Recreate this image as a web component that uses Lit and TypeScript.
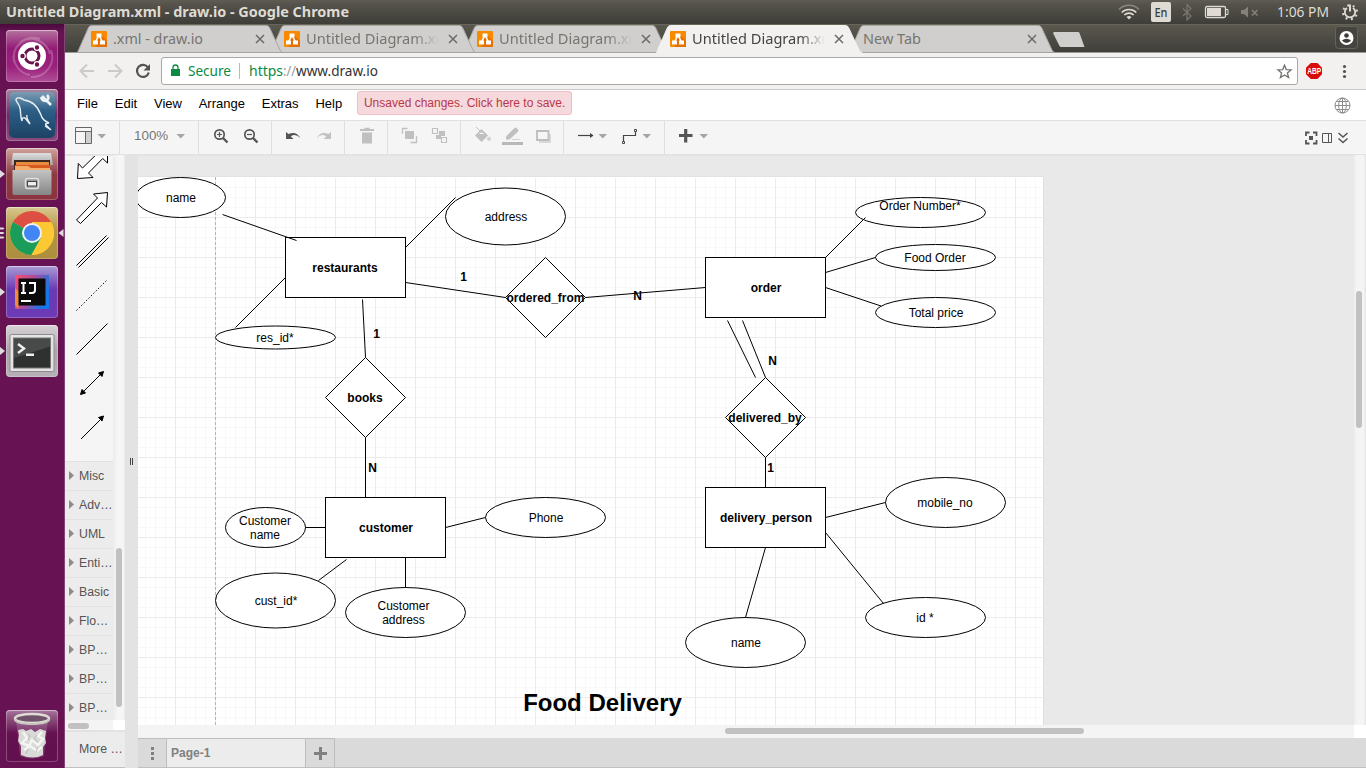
import { LitElement, html, svg, css } from "lit";
import { customElement, property } from "lit/decorators.js";

const UI = `"Noto Sans", "Open Sans", sans-serif`;

/** Text set to an exact advance width. */
const fit = (t: string, w: number, size: number, fill: string, weight = 400, h = 20, base = 14) => html`<svg
  width=${w} height=${h} style="overflow:visible;display:block;flex:none"><text x="0" y=${base} font-family=${UI}
  font-size=${size} font-weight=${weight} fill=${fill} textLength=${w} lengthAdjust="spacingAndGlyphs">${t}</text></svg>`;

const TABS = [
  { title: ".xml - draw.io", w: 90, icon: true, active: false },
  { title: "Untitled Diagram.xml", w: 147, icon: true, active: false },
  { title: "Untitled Diagram.xml", w: 147, icon: true, active: false },
  { title: "Untitled Diagram.xml", w: 147, icon: true, active: true },
  { title: "New Tab", w: 58, icon: false, active: false },
];

@customElement("system-bar")
class SystemBar extends LitElement {
  static styles = css`
    :host { display: flex; height: 24px; box-sizing: border-box; align-items: center; padding: 0 0 0 6px; justify-content: space-between;
      background: linear-gradient(#5e5c53, #54524a 20%, #3e3d38); }
  `;
  render() {
    return html`${fit("Untitled Diagram.xml - draw.io - Google Chrome", 343, 14.5, "#dfdbd2", 700, 20, 15)}
      <svg width="256" height="24" viewBox="1110 0 256 24">
        <g fill="none" stroke="#dfdbd2" stroke-width="1.6">
          <path d="M1119 9.500a14 14 0 0 1 20 0" stroke="#8a877f" />
          <path d="M1121.700 12.500a10.500 10.500 0 0 1 14.600 0" />
          <path d="M1124.300 15a6.800 6.800 0 0 1 9.400 0" />
        </g>
        <path d="M1126.500 17a4 4 0 0 1 5 0l-2.500 2.500z" fill="#dfdbd2" />
        <rect x="1151" y="2" width="20" height="20" rx="2" fill="#dfdbd2" />
        <text x="1154.500" y="17" font-family=${UI} font-size="12.500" font-weight="500" textLength="13" lengthAdjust="spacingAndGlyphs" fill="#3c3b37">En</text>
        <path d="M1183 8.500l8 7.500-4 4V4.500l4 4-8 7.500" fill="none" stroke="#7b7870" stroke-width="1.200" />
        <rect x="1205.500" y="6.500" width="20" height="11" rx="1.500" fill="none" stroke="#dfdbd2" stroke-width="1.300" />
        <rect x="1207" y="8" width="14" height="8" fill="#dfdbd2" />
        <path d="M1226 9.500h2v5h-2" fill="none" stroke="#dfdbd2" />
        <path d="M1241 10h3l4-3.500v11l-4-3.500h-3z" fill="#85827a" />
        <path d="M1252 10l5.500 5.500m0-5.500l-5.500 5.500" stroke="#85827a" stroke-width="1.500" />
        <text x="1277" y="17" font-family=${UI} font-size="14" textLength="52" lengthAdjust="spacingAndGlyphs" fill="#dfdbd2">1:06 PM</text>
        <g fill="none" stroke="#dfdbd2">
          <path d="M1347 8a5.200 5.200 0 1 0 6 0" stroke-width="1.800" />
          <path d="M1350 4.500v7" stroke-width="2" />
          <circle cx="1350" cy="12.300" r="7" stroke-width="2" stroke-dasharray="2 3.500" stroke-dashoffset="3" />
        </g>
      </svg>`;
  }
}

const ubuntu = svg`
  <path d="M8 32a20 20 0 0 1 26-23M45 20a20 20 0 0 1-20 27M14 12a20 20 0 0 1 30 12M8 24a19 19 0 0 0 16 21" fill="none" stroke="#ffffff" stroke-opacity=".22" stroke-width="2"/>
  <circle cx="26" cy="26" r="14" fill="#fff"/>
  <circle cx="26" cy="26" r="7" fill="none" stroke="#6a1150" stroke-width="3"/>
  <g stroke="#fff" stroke-width="1.200" fill="#6a1150"><circle cx="16.500" cy="26" r="2.800"/><circle cx="31" cy="17.500" r="2.800"/><circle cx="31" cy="34.500" r="2.800"/></g>`;
const mysql = svg`
  <rect x="3" y="3" width="46" height="46" rx="5" fill="url(#sea)"/>
  <path d="M10 10c2-2 6-1 8 1 9 1 14 7 17 15 1 4 3 6 8 8-3 0-4 1-3 2l5 5-6-4M10 10c-1 2 3 4 4 9 1 4 0 8 2 13 0-3 1-4 3-3 2 2 3 4 5 6-2-4-4-6-3-9" fill="none" stroke="#e8f0f5" stroke-width="1.400"/>
  <path d="M36 7l4 4M41 6c2 2 2 4-1 6-2 0-4-1-5-4M40 11l5 5" fill="none" stroke="#eef3f6" stroke-width="2.600"/>`;
const files = svg`
  <path d="M7 5h38l2 12H5z" fill="url(#steel)"/>
  <rect x="8" y="12" width="36" height="13" fill="#3c2a20"/>
  <path d="M10 14h33v3H10z" fill="#e98a3f"/><path d="M9 17h35v5H9z" fill="#d8591e"/><path d="M9 18h13l3 2h19v4H9z" fill="#f5ad6c"/>
  <path d="M6.500 22h39v24a2 2 0 0 1-2 1H8.500a2 2 0 0 1-2-1z" fill="url(#steel2)"/>
  <rect x="19.500" y="30.500" width="13" height="10" rx="2" fill="#9b9b9b" stroke="#e0e0e0" stroke-width="1.500"/><rect x="21.500" y="33.500" width="9" height="4.500" fill="#eee" stroke="#444"/>`;
const chrome = svg`
  <circle cx="26" cy="26" r="22" fill="#fcc934"/>
  <path d="M26 26L7 15A22 22 0 0 1 45 15H26z" fill="#dd4f43"/><path d="M7 15A22 22 0 0 0 25.500 48L35 31 26 26z" fill="#1a9c5a"/>
  <path d="M35 31L25.500 48A22 22 0 0 0 45 15H26z" fill="#fcc934"/>
  <circle cx="26" cy="26" r="10" fill="#f1f1f1"/><circle cx="26" cy="26" r="8" fill="#4285f4"/>`;
const idea = svg`
  <path d="M9 9h34v34H9z" fill="url(#idea)"/><path d="M9 22l6 6-3 15-3-4z" fill="#f08a3c"/>
  <rect x="12.500" y="12.500" width="27" height="27" fill="#0b0b0b"/>
  <path d="M15 17h5M17.500 17v10M15 27h5M23 17h6v7q0 3-3 3h-3" fill="none" stroke="#fff" stroke-width="2"/><path d="M15 35h10" stroke="#fff" stroke-width="2"/>`;
const terminal = svg`
  <rect x="4" y="9.500" width="44" height="37" rx="1.500" fill="#e4e4e4" stroke="#8f8c8d"/>
  <rect x="7.500" y="13" width="37" height="30" fill="#2f3030" stroke="#777"/><path d="M8 13.500h36v8L8 33z" fill="#fff" opacity=".12"/>
  <path d="M12 19l6 4.500-6 4.500M20 29.700h8" fill="none" stroke="#eee" stroke-width="2.400"/>`;
const trash = svg`
  <path d="M10 10l4 36q12 5 24 0l4-36z" fill="#fff" fill-opacity=".16"/>
  <path d="M12 20l5-1 3 2 5-2 4 3 5-3 6 2-1 7 1 5-3 4 0 8q-10 5-22 0l0-9-3-5 1-6z" fill="#d9dad7"/>
  <path d="M17 22l4 6-5 5 7 3 3-6 6 5 5-6-5-3 4-4M18 40l6-4 7 5 5-4" fill="none" stroke="#f4f4f2" stroke-width="2.500"/>
  <path d="M22 24l2 2-2 4M31 25l-3 4 4 3M22 39l-2 5M32 37l-2 5" fill="none" stroke="#b9bbb6"/>
  <ellipse cx="26" cy="8.500" rx="17" ry="4.500" fill="#70536a" stroke="#dddcd5" stroke-width="2.500"/>
  <path d="M8.500 9q1 5 17.500 5t17.500-5" fill="none" stroke="#c6c4be" stroke-width="1.800"/>`;

const APPS = [
  { c: "pink", art: ubuntu }, { c: "plum", art: mysql }, { c: "red", art: files, mark: 1 },
  { c: "gold", art: chrome, mark: 3 }, { c: "violet", art: idea, mark: 1 }, { c: "grey", art: terminal, mark: 1 },
];

@customElement("app-launcher")
class AppLauncher extends LitElement {
  static styles = css`
    :host { display: flex; flex-direction: column; gap: 7px; width: 65px; box-sizing: border-box; padding: 6px 0 6px; flex: none;
      background: linear-gradient(#4a0a3c, #671253 8px, #671253); border-right: 1px solid #844475; }
    .row { display: grid; grid-template-columns: 6px 52px 6px; height: 52px; }
    .tile { border-radius: 4px; box-shadow: inset 0 0 0 1px #ffffff38, inset 0 1px 1px #ffffff60; height: 52px; }
    .tile svg { display: block; }
    .pink { background: linear-gradient(#b4739f, #941c76 35%, #9a207b 70%, #b04f98); }
    .plum { background: linear-gradient(#a884a0, #6e2b62 50%, #8b4a80); }
    .red { background: linear-gradient(#cfa29c, #8f3b42 50%, #8b333f); }
    .gold { background: linear-gradient(#d8c890, #b39544 45%, #ac8e3e); }
    .violet { background: linear-gradient(#a99ad4, #6a3ab2 45%, #6d3bb5); }
    .grey { background: linear-gradient(#d8d3d7, #aca4ab 50%, #b8b1b7); }
    .bin { background: linear-gradient(#a5749a, #641150 45%, #63104f); }
    .last { margin-top: auto; }
    .edge { overflow: visible; }
  `;
  render() {
    const marks = (n = 0) => n === 1 ? svg`<path d="M0 22l5 4-5 4z" fill="#ddd"/>`
      : n === 3 ? svg`<path d="M0 20.500h3l1.500 1-1.500 1H0zM0 25h3l1.500 1-1.500 1H0zM0 29.500h3l1.500 1-1.500 1H0z" fill="#ddd"/>` : "";
    return html`
      ${APPS.map((a) => html`<div class="row">
        <svg class="edge" width="6" height="52">${marks(a.mark)}</svg>
        <div class="tile ${a.c}"><svg width="52" height="52">
          <defs>
            <linearGradient id="sea" x2="0" y2="1"><stop stop-color="#7d9cb5" /><stop offset=".4" stop-color="#2c5f87" /><stop offset="1" stop-color="#1d4264" /></linearGradient>
            <linearGradient id="steel" x2="0" y2="1"><stop stop-color="#dedede" /><stop offset="1" stop-color="#a5a5a5" /></linearGradient>
            <linearGradient id="steel2" x2="0" y2="1"><stop stop-color="#c4c4c4" /><stop offset="1" stop-color="#858585" /></linearGradient>
            <linearGradient id="idea" x2="1" y2=".4"><stop stop-color="#fb4f72" /><stop offset=".5" stop-color="#b24a96" /><stop offset="1" stop-color="#1478e8" /></linearGradient>
          </defs>${a.art}</svg></div>
        <svg class="edge" width="6" height="52">${a.mark === 3 ? svg`<path d="M5.500 22l-5 4 5 4z" fill="#ddd"/>` : ""}</svg>
      </div>`)}
      <div class="row last"><span></span><div class="tile bin"><svg width="52" height="52">${trash}</svg></div></div>`;
  }
}

@customElement("browser-frame")
class BrowserFrame extends LitElement {
  static styles = css`
    :host { display: block; flex: none; }
    .strip { display: flex; height: 29px; padding: 0 0 0 13px; background: linear-gradient(#5b594f, #3f3e39); box-shadow: inset 0 1px #68665a, inset 0 -1px #9a9994; }
    .tab { position: relative; width: 193px; flex: none; display: flex; box-sizing: border-box; padding: 6px 0 0 13px; height: 29px; }
    .shape { position: absolute; left: 0; top: 0; z-index: 0; overflow: visible; }
    .fav { flex: none; margin: 1px 6px 0 0; z-index: 1; }
    .name { flex: 1; min-width: 0; height: 22px; z-index: 1; }
    .faded .name { -webkit-mask-image: linear-gradient(90deg, #000 108px, transparent 133px); mask-image: linear-gradient(90deg, #000 108px, transparent 133px); }
    .x { flex: none; width: 10px; margin: 4px 6px 0 7px; height: 10px; z-index: 1; }
    .plus { margin: 7px 0 0 9px; }
    .spacer { flex: 1; }
    .user { margin: 2px 7px 0 0; }
    .nav { display: flex; height: 37px; box-sizing: border-box; background: #f2f1f0; border-bottom: 1px solid #cbcac8; padding-top: 4px; }
    .omni { width: 1137px; height: 28px; box-sizing: border-box; border: 1px solid #a9a8a7; border-radius: 3px; background: #fff; display: flex; padding: 4px 0 0 9px; }
    .divider { width: 1px; height: 16px; background: #bbb; margin: 1px 9px 0 8px; }
    .star { margin-left: auto; margin-right: 4px; }
    .lock { margin: 2px 8px 0 0; }
  `;
  render() {
    return html`
      <div class="strip">
        ${TABS.map((t, i) => html`<div class="tab ${t.icon && i ? "faded" : ""}" style="z-index:${t.active ? 9 : 6 - i}">
          <svg class="shape" width="207" height="29">
            <path d="M-.5 28.500L10.500 3.500Q11.500 1.500 13.500 1.500H188.500Q190.500 1.500 191.500 3.500L202 26q1 2.500 3 2.500${t.active ? "V29H0z" : ""}"
              fill=${t.active ? "#f2f1f0" : "#d0cfcd"} stroke=${t.active ? "#f2f1f0" : "#a8a7a3"} stroke-width="1" />
            ${t.active ? "" : svg`<path d="M0 28.500h205" stroke="#a5a4a1"/>`}
          </svg>
          ${t.icon ? html`<svg class="fav" width="16" height="16"><rect width="16" height="16" rx="1" fill="#f98a00" /><path d="M10 4l6 6v6H6l-3-3z" fill="#e57000" />
            <path d="M7.500 5L4.500 11M8.500 5L11.500 11" stroke="#fff" stroke-width="1.600" /><path d="M5.500 2.500h5v4h-5zM2 9.500h5v4H2zM9 9.500h5v4H9z" fill="#fff" /></svg>` : ""}
          <div class="name">${fit(t.title, t.w, 14.5, t.active ? "#45443f" : "#77756f", 400, 22, 14)}</div>
          <svg class="x" width="10" height="10"><path d="M1 1l8 8M9 1L1 9" stroke="#6b6a65" stroke-width="1.500" /></svg>
        </div>`)}
        <svg class="plus" width="33" height="17"><path d="M2 1h24q1 0 1.500 1l5 14H9Q8 16 7.500 15L1 2z" fill="#d0cfcd" /></svg>
        <span class="spacer"></span>
        <svg class="user" width="24" height="24"><rect x=".5" y=".5" width="22" height="22" rx="3" fill="#45443f" stroke="#65635a" />
          <circle cx="11.500" cy="12" r="7" fill="#fff" /><circle cx="11.500" cy="9.500" r="2.300" fill="#3d3c38" /><path d="M7 14.200q4.500-3 9 0-1.500 2.800-4.500 2.800T7 14.200z" fill="#3d3c38" /></svg>
      </div>
      <div class="nav">
        <svg width="96" height="28" viewBox="65 57 96 28" fill="none" stroke="#cbcac8" stroke-width="2">
          <path d="M94 71H81M87 64.500L80.500 71l6.500 6.500M108 71h13M115 64.500l6.500 6.500-6.500 6.500" />
          <path d="M148 67.500a6 6 0 1 0 .8 5" stroke="#55534f" stroke-width="2.200" /><path d="M150 64v6.500h-6.500z" fill="#55534f" stroke="none" />
        </svg>
        <div class="omni">
          <svg class="lock" width="9" height="13"><path d="M0 5h9v7H0z" fill="#0b8a43" /><path d="M2 5.500V3.500a2.500 2.500 0 0 1 5 0v2" fill="none" stroke="#0b8a43" stroke-width="1.300" /></svg>
          ${fit("Secure", 43, 14, "#0b8a43")}
          <span class="divider"></span>
          ${fit("https", 34, 14, "#0b8a43")}${fit("://", 13, 14, "#999")}${fit("www.draw.io", 82, 14, "#333")}
          <svg class="star" width="17" height="19"><path d="M8.500 3.200l1.800 4.400 4.800.3-3.700 3 1.200 4.700-4.100-2.600-4.100 2.600 1.200-4.700-3.700-3 4.800-.3z" fill="none" stroke="#73716d" stroke-width="1.300" /></svg>
        </div>
        <svg width="68" height="28" viewBox="1298 57 68 28">
          <path d="M1310.800 63h6.600l4.600 4.700v6.600l-4.600 4.700h-6.600l-4.800-4.700v-6.600z" fill="#d90b0b" />
          <text x="1307.300" y="74" font-family="Liberation Sans, sans-serif" font-size="8.500" font-weight="700" textLength="14" lengthAdjust="spacingAndGlyphs" fill="#fff">ABP</text>
          <g fill="#55534f"><circle cx="1344.500" cy="66.500" r="1.600" /><circle cx="1344.500" cy="71.500" r="1.600" /><circle cx="1344.500" cy="76.500" r="1.600" /></g>
        </svg>
      </div>`;
  }
}

const caret = (x: number, y = 136) => svg`<path d="M${x - 4.5} ${y - 2}h8.500l-4.200 4.500z" fill="#a5a5a5"/>`;
const GROUPS: { x: number; end: number; art: unknown }[] = [
  { x: 65, end: 120, art: svg`<path d="M75.500 127.500h16v16h-16zM75.500 131.500h16M85.500 131.500v12" fill="none" stroke="#666"/><path d="M86 132h5v11h-5z" fill="#d0d0d0"/>${caret(102)}` },
  { x: 120, end: 199, art: svg`<text x="134" y="140" font-size="13.400" fill="#757575">100%</text>${caret(181)}` },
  { x: 199, end: 272, art: svg`<g fill="none" stroke="#555" stroke-width="1.700"><circle cx="219.500" cy="134.500" r="4.700"/><path d="M223 138l4.500 4.500" stroke-width="2.400"/><path d="M217 134.500h5M219.500 132v5" stroke-width="1.200"/>
      <circle cx="249.500" cy="134.500" r="4.700"/><path d="M253 138l4.500 4.500" stroke-width="2.400"/><path d="M247 134.500h5" stroke-width="1.200"/></g>` },
  { x: 272, end: 345, art: svg`<path d="M286 132v7h7.500l-2.700-2.500q4-3.500 9.700 1.500-4.500-7.500-12-4z" fill="#555"/><path d="M331 132v7h-7.500l2.700-2.500q-4-3.500-9.700 1.500 4.500-7.500 12-4z" fill="#c2c2c2"/>` },
  { x: 345, end: 388, art: svg`<path d="M360 129h4.500v-1.200h5V129h4.500v2h-14zM362 132.500h10v11h-10z" fill="#c0c0c0"/>` },
  { x: 388, end: 461, art: svg`<path d="M405 131h9v8h-9z" fill="#c0c0c0"/><path d="M402.500 134v-5.500h5M416.500 136v6.500h-6" fill="none" stroke="#c0c0c0" stroke-width="1.300"/>
      <path d="M432.500 128.500h5v5h-5zM441.500 137.500h5v5h-5z" fill="none" stroke="#c0c0c0" stroke-width="1.200"/><path d="M436 135v4h5v-3h4v-5h-6v4z" fill="#c0c0c0"/>` },
  { x: 461, end: 564, art: svg`<path d="M475 135.500l6.500-6.500 6.500 6.500-6.500 6.500z" fill="#c0c0c0"/><path d="M476 127l6 6M478 134.500l3.500-3.500 3.500 3.500z" stroke="#c0c0c0" fill="#f5f5f5"/><circle cx="489" cy="138.800" r="2.100" fill="#d2d2d2"/>
      <path d="M506 139.500v-3l8.500-8.500q1-1 2 0l1.500 1.500q1 1 0 2l-8.500 8z" fill="#c0c0c0"/><path d="M512 139.500h8" stroke="#d4d4d4"/><path d="M502 142h21v3h-21z" fill="#b8b8b8"/>
      <path d="M540 134h11v9h-12v-2z" fill="#d8d8d8"/><path d="M537 131h11.500v9H537z" fill="#f5f5f5" stroke="#bdbdbd" stroke-width="1.800"/>` },
  { x: 564, end: 665, art: svg`<path d="M578 135.500h15" stroke="#444" stroke-width="1.200"/><path d="M590 133l3.500 2.500-3.500 2.500z" fill="#444"/>${caret(603)}
      <path d="M623.500 141v-5.500h12v-4" fill="none" stroke="#444" stroke-width="1.200"/><path d="M622.500 141.500h2v2h-2zM634.500 129.500h2v2h-2z" fill="#fff" stroke="#444"/>${caret(647)}` },
  { x: 665, end: 720, art: svg`<path d="M679 135.500h13.500M685.700 129v13.500" stroke="#555" stroke-width="3.200"/>${caret(704)}` },
];

@customElement("editor-chrome")
class EditorChrome extends LitElement {
  static styles = css`
    :host { display: block; flex: none; font: 13px "Liberation Sans", Arial, sans-serif; }
    .menu { display: flex; height: 31px; box-sizing: border-box; background: #fff; border-bottom: 1px solid #e0e0e0; padding: 1px 15px 0 12px; align-items: flex-start; }
    .menu span { line-height: 25px; margin-right: 16.8px; color: #000; }
    .menu .notice { box-sizing: border-box; width: 215px; height: 24px; line-height: 22px; font-size: 12px; color: #b8384a; background: #f6d9dc; border: 1px solid #efbfc5; border-radius: 3px; padding-left: 6px; margin: 0 0 0 -2px; white-space: nowrap; }
    .globe { margin: 6px 0 0 auto; }
    .tools { display: flex; height: 34px; box-sizing: border-box; background: #f5f5f5; border-bottom: 1px solid #e2e2e2; }
    .group { display: block; box-sizing: border-box; border-right: 1px solid #dfdfdf; flex: none; }
    .group:nth-of-type(9), .right { border: 0; }
    .right { margin-left: auto; }
  `;
  render() {
    return html`
      <div class="menu">
        ${["File", "Edit", "View", "Arrange", "Extras", "Help"].map((m) => html`<span>${m}</span>`)}
        <span class="notice">Unsaved changes. Click here to save.</span>
        <svg class="globe" width="17" height="17" fill="none" stroke="#8c8c8c"><circle cx="8.500" cy="8.500" r="7.500" /><ellipse cx="8.500" cy="8.500" rx="3.800" ry="7.500" /><path d="M8.500 1v15M1 8.500h15M2.300 4.500h12.400M2.300 12.500h12.400" /></svg>
      </div>
      <div class="tools">
        ${GROUPS.map((g) => html`<svg class="group" width=${g.end - g.x} height="33" viewBox="${g.x} 121 ${g.end - g.x} 33" preserveAspectRatio="xMinYMin slice">${g.art}</svg>`)}
        <svg class="right" width="66" height="33" viewBox="1300 121 66 33" fill="none" stroke="#555">
          <path d="M1306 136v-3.500h3.500M1313 132.500h3.500v3.500M1306 140v3.500h3.500M1316.500 140v3.500h-3.500" stroke-width="1.800" /><path d="M1309 136h4v4h-4z" fill="#555" stroke="none" />
          <path d="M1322.500 133.500h9v9h-9zM1328.500 133.500v9" /><path d="M1338.500 133l4.500 4 4.500-4M1338.500 138.500l4.500 4 4.500-4" stroke-width="1.500" />
        </svg>
      </div>`;
  }
}

@customElement("shape-sidebar")
class ShapeSidebar extends LitElement {
  static styles = css`
    :host { display: grid; grid-template: 565px 10px 1fr / 48px 12px; width: 60px; flex: none; background: #f5f5f5; font: 12.3px "Liberation Sans", Arial, sans-serif; color: #555; }
    .list { overflow: hidden; }
    .palette { display: block; }
    .section { height: 29px; box-sizing: border-box; border-top: 1px solid #e2e2e2; background: #ececec; display: flex; align-items: center; gap: 5px; padding: 0 0 1px 4px; white-space: nowrap; }
    .section svg { flex: none; }
    .track { background: linear-gradient(90deg, #ececec, #f6f6f6 40%, #f6f6f6 80%, #ececec); padding: 393px 3px 0; }
    .thumb { display: block; height: 159px; border-radius: 3px; background: #c1c1c1; }
    .htrack { background: #f4f4f4; padding: 3px 0 0 3px; }
    .hthumb { display: block; width: 21px; height: 6px; border-radius: 3px; background: #c1c1c1; }
    .corner { background: #fff; }
    .more { grid-column: 1 / 3; background: #ececec; border-top: 2px solid #e2e2e2; padding-left: 14px; line-height: 34px; border-bottom: 1px solid #c0c0c0; white-space: nowrap; }
  `;
  render() {
    return html`
      <div class="list">
        <svg class="palette" width="48" height="306" viewBox="65 155 48 306" fill="none" stroke="#000" stroke-width="1">
          <path d="M77.500 178.500l.8-15 4.200 4.500L103 148l4.500 2v13l-4.800-4.500L88.500 173l4.500 4.500z" fill="#fff" />
          <path d="M76.500 220l4 3.500 21-21 5 4.500 1-14.500-14 1.500 4 4z" fill="#fff" />
          <path d="M76.500 265.500l30-30M78.500 267.500l30-30M76.500 354.500l31-31M81 394l22-22M81 439l22-22" />
          <path d="M76.500 310.500l30-30" stroke-dasharray="1.400 2" />
          <path d="M80.500 394.500l1.500-5 3.500 3.500zM103.500 371.500l-5 1.500 3.500 3.500zM103.500 416l-5 1.500 3.500 3.500z" fill="#000" />
          <path d="M65 155.500h48" stroke="#e6e6e6" />
        </svg>
        ${["Misc", "Adv…", "UML", "Enti…", "Basic", "Flo…", "BP…", "BP…", "BP…"].map((s) => html`<div class="section"><svg width="5" height="9"><path d="M0 0l5 4.500L0 9z" fill="#8c8c8c" /></svg>${s}</div>`)}
      </div>
      <div class="track"><span class="thumb"></span></div>
      <div class="htrack"><span class="hthumb"></span></div><div class="corner"></div>
      <div class="more">More …</div>`;
  }
}

type Node = [kind: "box" | "oval" | "rhomb", cx: number, cy: number, rx: number, ry: number, label: string[], dx?: number, dy?: number];
const NODES: Node[] = [
  ["box", 345.5, 267.5, 60, 30, ["restaurants"], -0.5], ["box", 765.5, 287.5, 60, 30, ["order"], 0.5],
  ["box", 385.5, 527.5, 60, 30, ["customer"], 0.5], ["box", 765.5, 517.5, 60, 30, ["delivery_person"], 0.5],
  ["rhomb", 545.5, 297.5, 40, 40, ["ordered_from"]], ["rhomb", 365.5, 397.5, 40, 40, ["books"], -0.5], ["rhomb", 765.5, 417.5, 40, 40, ["delivered_by"], -0.5],
  ["oval", 180.5, 197.5, 45, 20, ["name"], 0.5], ["oval", 505.5, 216.5, 60, 28.5, ["address"], 0.5], ["oval", 275.5, 337.5, 60, 11.5, ["res_id*"], -0.5],
  ["oval", 265.5, 527.5, 40, 20, ["Customer", "name"], -0.5], ["oval", 275.5, 600.5, 60, 27.5, ["cust_id*"], 0.5],
  ["oval", 405.5, 612.5, 60, 25, ["Customer", "address"], -2], ["oval", 545.5, 517.5, 60, 20, ["Phone"], 0.5],
  ["oval", 920.5, 212.5, 65, 15, ["Order Number*"], -0.5, -6.5], ["oval", 935.5, 257.5, 60, 13, ["Food Order"], -0.5], ["oval", 935.5, 312.5, 60, 15, ["Total price"], 0.5],
  ["oval", 945.5, 502.5, 60, 25, ["mobile_no"], -0.5], ["oval", 925.5, 617.5, 60, 20, ["id *"], -0.5], ["oval", 745.5, 642.5, 60, 25, ["name"], 0.5],
];
const EDGES = [
  [222.5, 214.5, 296.5, 240.5], [285.5, 277.5, 235.5, 327.5], [405.5, 247.5, 455.5, 197.5], [405.5, 282.5, 505.5, 297.5],
  [585.5, 297.5, 705.5, 287.5], [362.5, 299.5, 365.5, 357.5], [365.5, 437.5, 365.5, 497.5], [825.5, 257.5, 865.5, 217.5],
  [825.5, 272.5, 875.5, 257.5], [825.5, 287.5, 881, 306], [727.5, 320.5, 755.5, 377.5], [742.5, 320.5, 765.5, 377.5],
  [765.5, 457.5, 765.5, 487.5], [305.5, 527.5, 325.5, 527.5], [445.5, 527.5, 485.5, 517.5], [346.5, 559.5, 318.5, 580.5],
  [405.5, 557.5, 405.5, 587.5], [825.5, 517.5, 885.5, 502.5], [825.5, 532.5, 883.5, 603.5], [765.5, 547.5, 745.5, 617.5],
];
const MARKS: [string, number, number][] = [["1", 463.5, 281], ["N", 637.5, 300], ["1", 376.5, 338], ["N", 372.5, 472], ["N", 772.5, 365], ["1", 770.5, 472]];

@customElement("er-canvas")
class ErCanvas extends LitElement {
  static styles = css`
    :host { display: block; }
    .sheet { display: block; background: #e9e9e9; font-family: "Liberation Sans", Arial, sans-serif; font-size: 12px; }
    .strong { font-weight: 700; }
    .heading { font-weight: 700; font-size: 24px; }
  `;
  render() {
    return html`<svg class="sheet" width="1216" height="570" viewBox="138 155 1216 570">
      <defs>
        <pattern id="grid" x="135" y="177" width="40" height="40" patternUnits="userSpaceOnUse">
          <path d="M10.500 0v40M20.500 0v40M30.500 0v40M0 10.500h40M0 20.500h40M0 30.500h40" stroke="#f8f8f8" /><path d="M.5 0v40M0 .5h40" stroke="#ebebeb" />
        </pattern>
      </defs>
      <path d="M138 155.500h1216" stroke="#e3e3e3" />
      <rect x="135" y="177" width="908" height="560" fill="#fff" /><rect x="135" y="178" width="907" height="560" fill="url(#grid)" />
      <path d="M138 176.500h905" stroke="#e2e2e2" /><path d="M1043.500 177v550" stroke="#dedede" />
      <path d="M215.500 177v548" stroke="#b4b4b4" stroke-dasharray="3 2" />
      <g fill="#fff" stroke="#000">${NODES.map(([k, x, y, rx, ry]) =>
        k === "box" ? svg`<rect x=${x - rx} y=${y - ry} width=${rx * 2} height=${ry * 2}/>`
        : k === "oval" ? svg`<ellipse cx=${x} cy=${y} rx=${rx} ry=${ry}/>`
        : svg`<path d="M${x} ${y - ry}L${x + rx} ${y} ${x} ${y + ry} ${x - rx} ${y}z"/>`)}</g>
      <g stroke="#000">${EDGES.map(([a, b, c, d]) => svg`<path d="M${a} ${b}L${c} ${d}"/>`)}</g>
      <g text-anchor="middle">
        ${NODES.map(([k, x, y, , , label, dx = 0, dy = 0]) => label.map((t, i) => svg`<text class=${k === "oval" ? "" : "strong"} x=${x + dx} y=${Math.round(y + dy + 4 - (label.length - 1) * 7 + i * 14)}>${t}</text>`))}
        ${MARKS.map(([t, x, y]) => svg`<text class="strong" x=${x} y=${y}>${t}</text>`)}
        <text class="heading" x="602.500" y="711">Food Delivery</text>
      </g>
    </svg>`;
  }
}

@customElement("app-root")
class AppRoot extends LitElement {
  @property() page = "Page-1";
  static styles = css`
    :host { display: flex; flex-direction: column; width: 1366px; height: 768px; overflow: hidden; background: #fff; font: 12px "Liberation Sans", Arial, sans-serif; }
    .desk { display: flex; flex: 1; min-height: 0; }
    .window { display: flex; flex-direction: column; width: 1301px; }
    .work { display: flex; flex: 1; min-height: 0; }
    .split { width: 13px; background: #e3e3e3; display: flex; align-items: center; justify-content: center; flex: none; }
    .stage { display: grid; grid-template: 570px 13px 30px / 1216px 12px; }
    .vtrack { background: linear-gradient(90deg, #eee, #f5f5f5 30%, #f5f5f5 80%, #e4e4e4); padding: 136px 4px 0 2px; }
    .vthumb { display: block; height: 137px; border-radius: 3px; background: #c1c1c1; }
    .htrack { background: #f4f4f4; padding: 3px 0 0 587px; }
    .hthumb { display: block; height: 6px; width: 359px; border-radius: 3px; background: #c1c1c1; }
    .corner { background: #fff; }
    .pages { grid-column: 1 / 3; display: flex; background: #dadada; border-bottom: 1px solid #c0c0c0; box-sizing: border-box; }
    .cell { box-sizing: border-box; width: 29px; border: 1px solid #bdbdbd; border-bottom: 0; border-left: 0; }
    .current { box-sizing: border-box; width: 139px; background: #ececec; border-top: 1px solid #bdbdbd; border-right: 1px solid #bdbdbd; color: #808080; font-weight: 700; line-height: 28px; padding-left: 4px; }
  `;
  render() {
    return html`
      <system-bar></system-bar>
      <div class="desk">
        <app-launcher></app-launcher>
        <div class="window">
          <browser-frame></browser-frame>
          <editor-chrome></editor-chrome>
          <div class="work">
            <shape-sidebar></shape-sidebar>
            <div class="split"><svg width="5" height="8"><path d="M1.500 0v7M3.500 0v7" stroke="#444" /></svg></div>
            <div class="stage">
              <er-canvas></er-canvas>
              <div class="vtrack"><span class="vthumb"></span></div>
              <div class="htrack"><span class="hthumb"></span></div><div class="corner"></div>
              <div class="pages">
                <div class="cell"><svg width="28" height="28"><path d="M13 8h3v3h-3zM13 13h3v3h-3zM13 18h3v3h-3z" fill="#808080" /></svg></div>
                <div class="current">${this.page}</div>
                <div class="cell"><svg width="28" height="28"><path d="M8 14.500h13M14.500 8v13" stroke="#808080" stroke-width="3" /></svg></div>
              </div>
            </div>
          </div>
        </div>
      </div>`;
  }
}
